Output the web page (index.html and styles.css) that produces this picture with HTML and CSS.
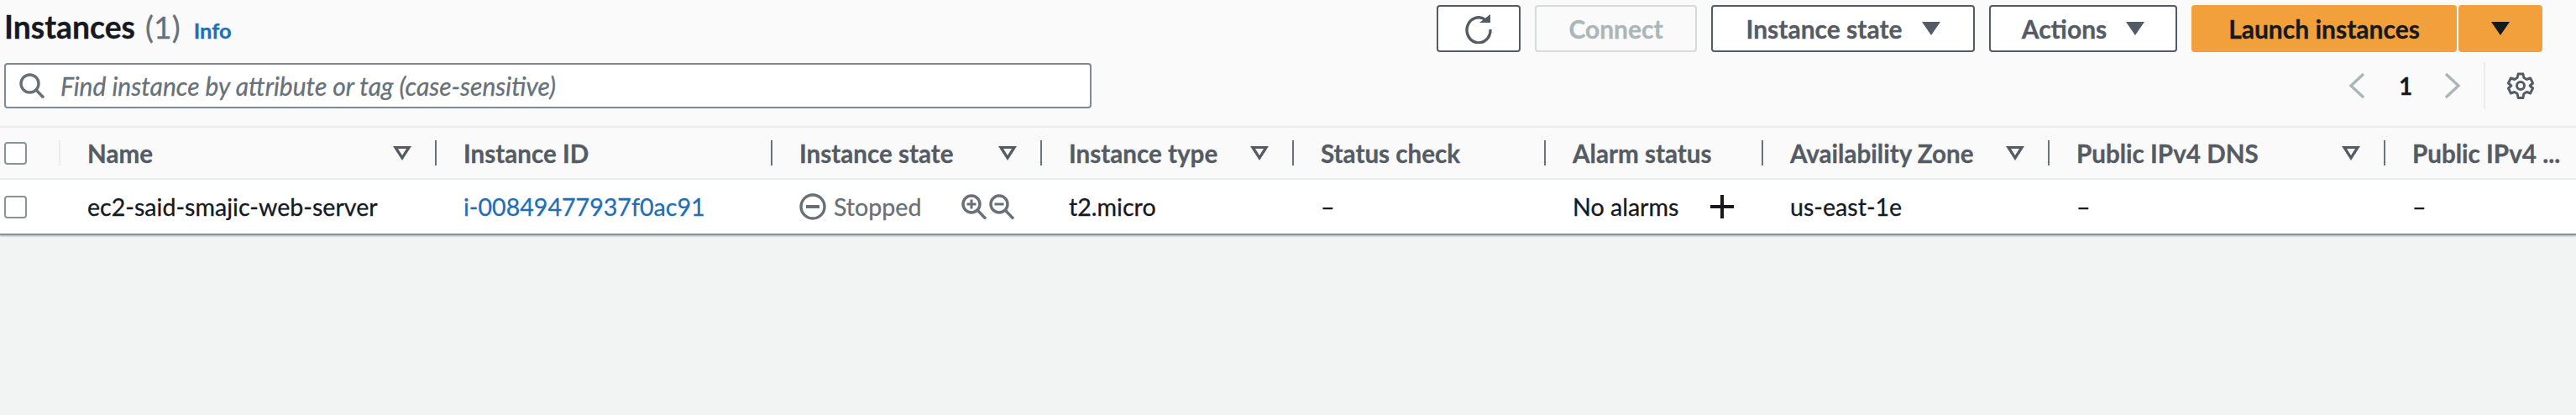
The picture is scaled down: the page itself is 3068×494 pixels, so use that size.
FILE: index.html
```html
<!DOCTYPE html>
<html>
<head>
    <title>Instances</title>
    <link rel="stylesheet" href="styles.css">
</head>
<body>
    <div class="top">
        <div class="top-bar">
            <h1 class="title">Instances <span class="count">(1)</span> <a class="info">Info</a></h1>
            <div class="actions">
                <button class="btn btn-refresh">
                    <svg width="36" height="36" viewBox="0 0 36 36" fill="none">
                        <path d="M26 7.5A14 15 0 1 0 32 19" stroke="#545b64" stroke-width="3.4"/>
                        <path d="M19 10h13V0z" fill="#545b64" transform="translate(0 1)"/>
                    </svg>
                </button>
                <button class="btn btn-connect" disabled>Connect</button>
                <button class="btn btn-state">Instance state <span class="caret"></span></button>
                <button class="btn btn-actions">Actions <span class="caret"></span></button>
                <div class="launch">
                    <button class="btn-launch">Launch instances</button>
                    <button class="btn-launch-more"><span class="caret caret-dark"></span></button>
                </div>
            </div>
        </div>

        <div class="tool-bar">
            <div class="search">
                <svg width="30" height="30" viewBox="0 0 30 30" fill="none" stroke="#687078" stroke-width="3.4">
                    <circle cx="12.5" cy="12.5" r="10.5"/>
                    <path d="M20 20l9 9.5"/>
                </svg>
                <span class="placeholder">Find instance by attribute or tag (case-sensitive)</span>
            </div>
            <div class="pager">
                <svg width="20" height="30" viewBox="0 0 20 30" fill="none" stroke="#aab7b8" stroke-width="3.4">
                    <path d="M18 1L3 15l15 14"/>
                </svg>
                <span class="page-num">1</span>
                <svg width="20" height="30" viewBox="0 0 20 30" fill="none" stroke="#aab7b8" stroke-width="3.4">
                    <path d="M2 1l15 14L2 29"/>
                </svg>
                <div class="pager-gear">
                    <svg width="32" height="32" viewBox="0 0 32 32" fill="none" stroke="#545b64" stroke-width="3">
                        <circle cx="16" cy="16" r="4.5"/>
                        <path d="M13 2h6l1 4.500 3.500 2 4.500-1.500 3 6-3.500 3v0l3.500 3-3 6-4.500-1.500-3.500 2-1 5h-6l-1-5-3.500-2-4.500 1.500-3-6 3.500-3-3.500-3 3-6 4.500 1.500 3.500-2z" stroke-linejoin="round" transform="translate(0.500 0) scale(0.97 1)"/>
                    </svg>
                </div>
            </div>
        </div>
    </div>

    <div class="table">
        <div class="row head">
            <div class="check-cell"><span class="checkbox"></span></div>
            <div class="th th-name">Name <span class="filter"></span></div>
            <div class="th">Instance ID</div>
            <div class="th">Instance state <span class="filter"></span></div>
            <div class="th">Instance type <span class="filter"></span></div>
            <div class="th">Status check</div>
            <div class="th">Alarm status</div>
            <div class="th">Availability Zone <span class="filter"></span></div>
            <div class="th">Public IPv4 DNS <span class="filter"></span></div>
            <div class="th th-last">Public IPv4 ...</div>
        </div>
        <div class="row body">
            <div class="check-cell"><span class="checkbox"></span></div>
            <div class="td">ec2-said-smajic-web-server</div>
            <div class="td"><a class="link">i-00849477937f0ac91</a></div>
            <div class="td td-state">
                <span class="state">
                    <svg width="32" height="32" viewBox="0 0 32 32" fill="none" stroke="#687078" stroke-width="3.4">
                        <circle cx="16" cy="16" r="14"/>
                        <path d="M8 16h16" stroke-width="4"/>
                    </svg>
                    Stopped
                </span>
                <span class="zoom-icons">
                    <svg width="30" height="30" viewBox="0 0 30 30" fill="none" stroke="#687078" stroke-width="3.4">
                        <circle cx="12" cy="12" r="10"/>
                        <path d="M19 19l10 10.500"/>
                        <path d="M6.500 12h11M12 6.500v11" stroke-width="3"/>
                    </svg>
                    <svg width="30" height="30" viewBox="0 0 30 30" fill="none" stroke="#687078" stroke-width="3.4">
                        <circle cx="12" cy="12" r="10"/>
                        <path d="M19 19l10 10.500"/>
                        <path d="M6.500 12h11" stroke-width="3"/>
                    </svg>
                </span>
            </div>
            <div class="td">t2.micro</div>
            <div class="td">–</div>
            <div class="td td-alarm">
                No alarms
                <svg width="28" height="28" viewBox="0 0 28 28" stroke="#16191f" stroke-width="4">
                    <path d="M0 14h28M14 0v28"/>
                </svg>
            </div>
            <div class="td">us-east-1e</div>
            <div class="td">–</div>
            <div class="td">–</div>
        </div>
    </div>
</body>
</html>
```

FILE: styles.css
```css
* {
    box-sizing: border-box;
}

body {
    margin: 0;
    height: 494px;
    overflow: hidden;
    background-color: #f2f3f3;
    font-family: "Lato", "Liberation Sans", sans-serif;
    color: #16191f;
    -webkit-text-stroke: 0.3px;
}

.top {
    height: 150px;
    padding-top: 6px;
    background-color: #fafafa;
}

.top-bar {
    display: flex;
    justify-content: space-between;
    height: 56px;
    padding: 0 40px 0 5px;
}

.title {
    margin: 6px 0 0;
    font-size: 37.3px;
    line-height: 40px;
    font-weight: 700;
}

.count {
    margin-left: 3px;
    color: #687078;
    font-weight: 400;
}

.info {
    margin-left: 7px;
    color: #1d6fb8;
    font-size: 25.5px;
    font-weight: 700;
}

.actions {
    display: flex;
    gap: 17px;
}

.btn {
    display: flex;
    align-items: center;
    justify-content: center;
    height: 56px;
    padding: 0;
    background-color: #fff;
    border: 2px solid #545b64;
    border-radius: 4px;
    color: #545b64;
    font-family: inherit;
    font-size: 30px;
    font-weight: 700;
}

.btn-refresh {
    width: 100px;
}

.btn-connect {
    width: 193px;
    color: #aab7b8;
    border-color: #d5dbdb;
    background-color: #fafafa;
}

.btn-state {
    width: 314px;
    gap: 23px;
}

.btn-actions {
    width: 224px;
    gap: 23px;
}

.caret {
    width: 0;
    height: 0;
    border-left: 11px solid transparent;
    border-right: 11px solid transparent;
    border-top: 16px solid #545b64;
}

.caret-dark {
    border-top-color: #16191f;
}

.launch {
    display: flex;
    gap: 2px;
}

.btn-launch,
.btn-launch-more {
    height: 56px;
    background-color: #f2a03b;
    border: none;
    border-radius: 4px;
    color: #16191f;
    font-family: inherit;
    font-size: 30px;
    font-weight: 700;
}

.btn-launch {
    width: 316px;
}

.btn-launch-more {
    display: flex;
    align-items: center;
    justify-content: center;
    width: 100px;
}

.tool-bar {
    display: flex;
    justify-content: space-between;
    align-items: center;
    height: 56px;
    margin-top: 12px;
    padding: 0 40px 0 5px;
}

.search {
    display: flex;
    align-items: center;
    gap: 19px;
    width: 1295px;
    height: 54px;
    padding-left: 16px;
    background-color: #fff;
    border: 2px solid #7d8998;
    border-radius: 4px;
}

.placeholder {
    color: #687078;
    font-size: 30px;
    font-style: italic;
}

.pager {
    display: flex;
    align-items: center;
}

.page-num {
    width: 14px;
    margin: 0 40px;
    font-size: 28px;
    font-weight: 700;
    text-align: center;
}

.pager-gear {
    display: flex;
    align-items: center;
    height: 56px;
    margin-left: 27px;
    padding-left: 26px;
    border-left: 2px solid #eaeded;
}

.pager-gear svg {
    margin-right: 10px;
}

.table {
    border-top: 2px solid #eaeded;
    border-bottom: 2px solid #879596;
    box-shadow: 0 1px 2px rgba(0, 28, 36, 0.3);
    background-color: #fff;
}

.row {
    display: grid;
    grid-template-columns: 70px 448px 400px 321px 300px 300px 259px 341px 400px 229px;
    align-items: center;
}

.head {
    height: 62px;
    background-color: #fafafa;
    border-bottom: 2px solid #eaeded;
    color: #545b64;
    font-size: 29.6px;
    font-weight: 700;
}

.body {
    height: 64px;
    font-size: 28.6px;
}

.check-cell {
    padding-left: 5px;
    display: flex;
    align-items: center;
}

.checkbox {
    width: 27px;
    height: 27px;
    background-color: #fff;
    border: 2px solid #879596;
    border-radius: 4px;
}

.th {
    display: flex;
    align-items: center;
    justify-content: space-between;
    height: 30px;
    padding: 0 28px 0 32px;
    border-left: 2px solid #687078;
    white-space: nowrap;
}

.th-name {
    border-left-color: #eaeded;
}

.th-last {
    padding-right: 0;
}

.filter {
    position: relative;
    width: 0;
    height: 0;
    border-left: 11px solid transparent;
    border-right: 11px solid transparent;
    border-top: 17px solid #545b64;
}

.filter::after {
    content: "";
    position: absolute;
    left: -5px;
    top: -14px;
    border-left: 5px solid transparent;
    border-right: 5px solid transparent;
    border-top: 8px solid #fafafa;
}

.td {
    padding-left: 34px;
    white-space: nowrap;
}

.link {
    color: #1d6fb8;
}

.td-state {
    display: flex;
    align-items: center;
    justify-content: space-between;
    padding-right: 31px;
}

.state {
    display: flex;
    align-items: center;
    gap: 9px;
    color: #687078;
}

.zoom-icons {
    display: flex;
    gap: 3px;
}

.td-alarm {
    display: flex;
    align-items: center;
    gap: 38px;
}
```
